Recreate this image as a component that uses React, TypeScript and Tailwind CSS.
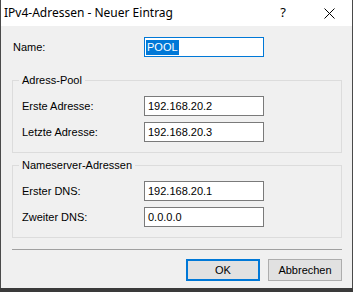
import React from "react";

const body = { fontFamily: '"Liberation Sans", Arial, sans-serif' };

function Field({ label, value }: { label: string; value: string }) {
  return (
    <div className="flex items-center h-[20px]">
      <div className="w-[122px] text-[11px] text-black leading-none">{label}</div>
      <div className="w-[120px] h-[20px] bg-white border border-[#7a7a7a] flex items-center pl-[3px] text-[11px] text-black leading-none">
        {value}
      </div>
    </div>
  );
}

function Group({ title, children, className }: { title: string; children: React.ReactNode; className?: string }) {
  return (
    <div className={"relative border border-[#dcdcdc] pl-[9px] pt-[15px] pb-[10px] flex flex-col gap-[6px] " + (className || "")}>
      <div className="absolute -top-[7px] left-[6px] px-[3px] bg-[#f0f0f0] text-[11px] leading-[13px] text-black">
        {title}
      </div>
      {children}
    </div>
  );
}

export default function App() {
  return (
    <div className="w-[353px] h-[292px] flex flex-col bg-[#3a3a3a]" style={body}>
      <div className="h-[288px] flex flex-col border-l border-r border-[#4a4a4a] bg-[#f0f0f0]">
        <div className="h-[26px] bg-white flex items-center shrink-0">
          <div
            className="pl-[3px] text-[12px] text-black flex-1"
            style={{ fontFamily: '"Noto Sans", "Open Sans", sans-serif' }}
          >
            IPv4-Adressen - Neuer Eintrag
          </div>
          <div
            className="w-[46px] text-center text-[13px] text-black mr-[0px]"
            style={{ fontFamily: '"Noto Sans", sans-serif' }}
          >
            ?
          </div>
          <div className="w-[46px] flex items-center justify-center mr-[0px]">
            <svg width="11" height="11" viewBox="0 0 11 11">
              <path d="M0.5 0.5 L10.5 10.5 M10.5 0.5 L0.5 10.5" stroke="#000" strokeWidth="1" />
            </svg>
          </div>
        </div>
        <div className="flex flex-col pl-[11px] pr-[10px] pt-[11px]">
          <div className="flex items-center h-[20px]">
            <div className="w-[132px] pl-[1px] text-[11px] text-black leading-none">Name:</div>
            <div className="w-[120px] h-[20px] bg-white border border-[#0078d7] flex items-center pl-[1px] text-[11px] leading-none">
              <span className="bg-[#0078d7] text-white px-[1px] py-[2px]">POOL</span>
            </div>
          </div>
          <Group title="Adress-Pool" className="mt-[23px]">
            <Field label="Erste Adresse:" value="192.168.20.2" />
            <Field label="Letzte Adresse:" value="192.168.20.3" />
          </Group>
          <Group title="Nameserver-Adressen" className="mt-[12px]">
            <Field label="Erster DNS:" value="192.168.20.1" />
            <Field label="Zweiter DNS:" value="0.0.0.0" />
          </Group>
          <div className="mt-[11px] h-[1px] bg-[#a0a0a0]" />
          <div className="mt-[9px] flex justify-end gap-[8px]">
            <div className="w-[74px] h-[22px] bg-[#e1e1e1] border-2 border-[#0078d7] flex items-center justify-center text-[11px] text-black">
              OK
            </div>
            <div className="w-[74px] h-[22px] bg-[#e1e1e1] border border-[#adadad] flex items-center justify-center text-[11px] text-black">
              Abbrechen
            </div>
          </div>
        </div>
      </div>
    </div>
  );
}
